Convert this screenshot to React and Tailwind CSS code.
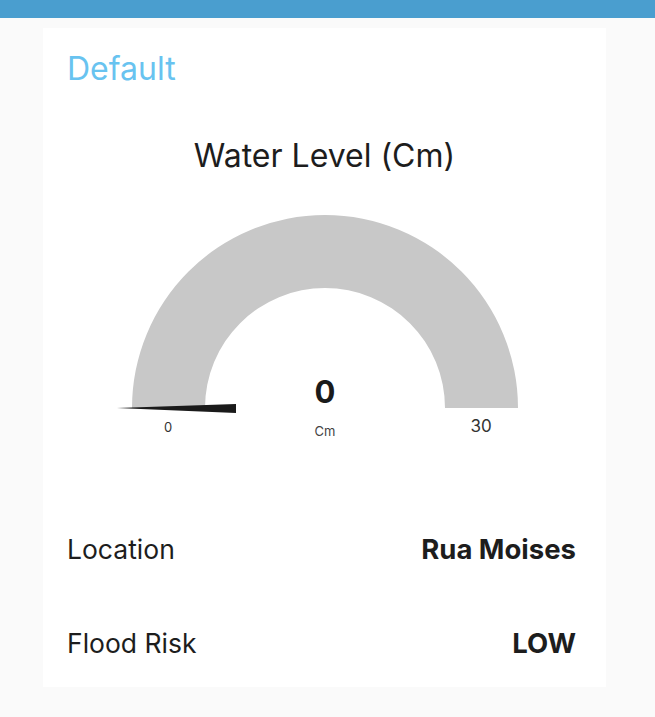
export default function App() {
  const cx = 282;
  const cy = 232;

  return (
    <div className="min-h-[717px] w-[655px] bg-[#fafafa] font-['Inter',sans-serif] text-[#1d1d1d]">
      <div className="h-[18px] bg-[#4a9ecf]" />

      <div className="ml-[43px] mt-[10px] flex w-[563px] flex-col bg-white pt-[21px] pb-[28px]">
        <div className="pl-[24px] text-[32px] leading-[40px] text-[#68c3f0]">Default</div>

        <div className="mt-[47px] text-center text-[32px] leading-[40px]">Water Level (Cm)</div>

        <svg width="563" height="269" viewBox="0 0 563 269" className="block">
          <path
            d={`M ${cx - 193} ${cy} A 193 193 0 0 1 ${cx + 193} ${cy} L ${cx + 120} ${cy} A 120 120 0 0 0 ${cx - 120} ${cy} Z`}
            fill="#c8c8c8"
          />
          <polygon points="74,232 193,228 193,237" fill="#1a1a1a" />
          <text x={cx} y="227" textAnchor="middle" fontSize="31" fontWeight="700" fill="#1a1a1a">0</text>
          <text x={cx} y="260" textAnchor="middle" fontSize="13" fill="#444">Cm</text>
          <text x="125" y="256" textAnchor="middle" fontSize="13" fill="#333">0</text>
          <text x="438" y="256" textAnchor="middle" fontSize="17" fill="#333">30</text>
        </svg>

        <div className="mt-[88px] flex items-center justify-between pl-[24px] pr-[30px] text-[26.5px] leading-[32px]">
          <span>Location</span>
          <span className="text-[27.5px] font-bold">Rua Moises</span>
        </div>
        <div className="mt-[62px] flex items-center justify-between pl-[24px] pr-[30px] text-[26.5px] leading-[32px]">
          <span>Flood Risk</span>
          <span className="text-[27.5px] font-bold">LOW</span>
        </div>
      </div>
    </div>
  );
}
